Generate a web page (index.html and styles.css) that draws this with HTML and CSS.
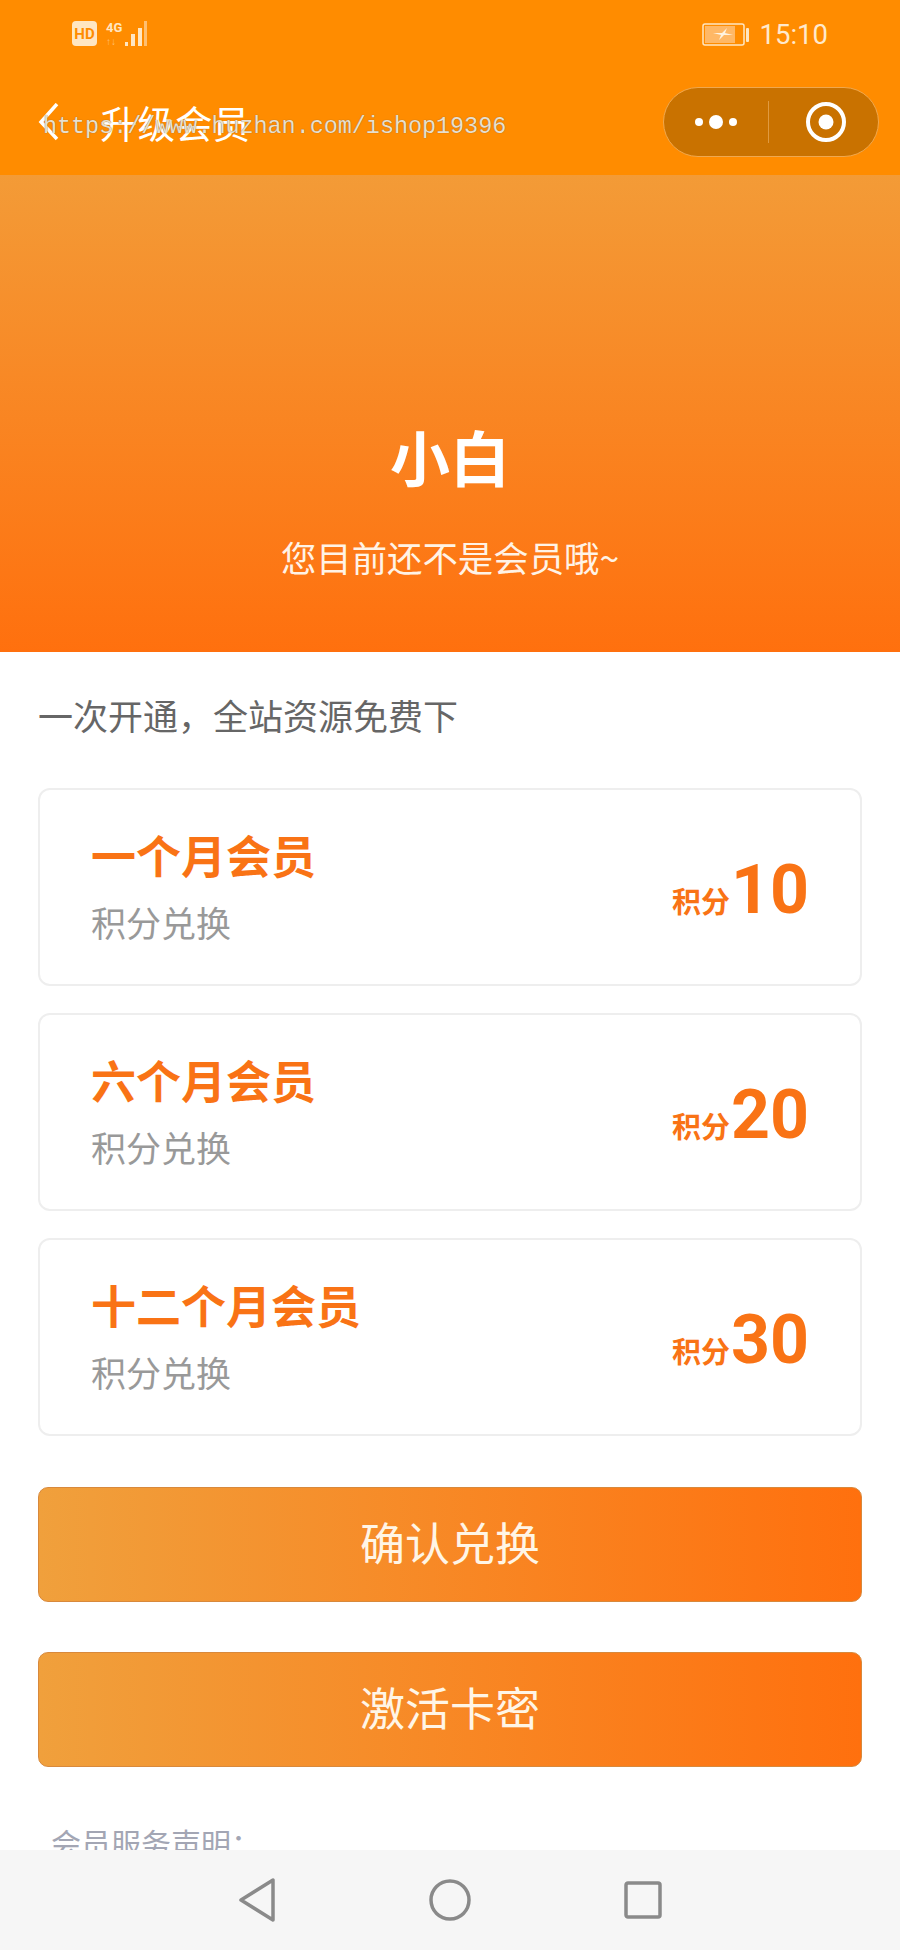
FILE: index.html
```html
<!DOCTYPE html>
<html lang="zh-CN">
<head>
<meta charset="utf-8">
<title>升级会员</title>
<link rel="stylesheet" href="styles.css">
</head>
<body>
<div class="phone">
  <header class="top">
    <div class="status">
      <div class="status-left">
        <svg class="net" width="80" height="28" viewBox="0 0 80 28">
          <rect x="1" y="1" width="25" height="25" rx="4" fill="#ffe6c2"/>
          <text x="13.5" y="19" class="hd">HD</text>
          <text x="35" y="12" class="four-g">4G</text>
          <text x="35" y="25" class="up-down">↑↓</text>
          <rect x="54" y="22" width="3" height="4" fill="#ffe6c2"/>
          <rect x="60" y="14" width="4" height="12" fill="#ffe6c2"/>
          <rect x="67" y="8" width="4" height="18" fill="#ffe6c2"/>
          <rect x="73" y="1" width="3" height="25" fill="#ffbf70"/>
        </svg>
      </div>
      <div class="status-right">
        <svg width="48" height="24" viewBox="0 0 48 24">
          <rect x="1" y="1" width="41" height="21" rx="2" fill="none" stroke="#ffe6c2" stroke-width="1.5"/>
          <rect x="3" y="3" width="30" height="17" fill="#ffb866"/>
          <rect x="44" y="5" width="3" height="14" rx="1" fill="#ffe6c2"/>
          <path d="M11 10l9 0 5-5-2 5 8 2-9 0-5 5 2-5z" fill="#fff3e0"/>
        </svg>
        <span class="time">15:10</span>
      </div>
    </div>
    <div class="nav">
      <div class="nav-left">
        <svg class="back" width="26" height="38" viewBox="0 0 26 38">
          <path d="M19 1L3 19l16 17" fill="none" stroke="#fff" stroke-width="3.5"/>
        </svg>
        <span class="nav-title">升级会员</span>
      </div>
      <div class="capsule">
        <div class="capsule-part">
          <svg width="42" height="16" viewBox="0 0 42 16">
            <circle cx="4" cy="8" r="4" fill="#fff"/>
            <circle cx="21" cy="8" r="7" fill="#fff"/>
            <circle cx="38" cy="8" r="4" fill="#fff"/>
          </svg>
        </div>
        <div class="capsule-line"></div>
        <div class="capsule-part capsule-target">
          <svg width="42" height="42" viewBox="0 0 42 42">
            <circle cx="21" cy="21" r="18" fill="none" stroke="#fff" stroke-width="4"/>
            <circle cx="21" cy="21" r="7.5" fill="#fff"/>
          </svg>
        </div>
      </div>
    </div>
    <div class="watermark">https://www.huzhan.com/ishop19396</div>
  </header>

  <main class="content">
    <section class="hero">
      <h1 class="hero-name">小白</h1>
      <p class="hero-sub">您目前还不是会员哦~</p>
    </section>
    <section class="body">
      <p class="intro">一次开通&#xFF0C;全站资源免费下</p>
      <div class="plans">
        <div class="plan">
          <div class="plan-info">
            <div class="plan-name">一个月会员</div>
            <div class="plan-note">积分兑换</div>
          </div>
          <div class="plan-price"><span class="unit">积分</span><span class="num">10</span></div>
        </div>
        <div class="plan">
          <div class="plan-info">
            <div class="plan-name">六个月会员</div>
            <div class="plan-note">积分兑换</div>
          </div>
          <div class="plan-price"><span class="unit">积分</span><span class="num">20</span></div>
        </div>
        <div class="plan">
          <div class="plan-info">
            <div class="plan-name">十二个月会员</div>
            <div class="plan-note">积分兑换</div>
          </div>
          <div class="plan-price"><span class="unit">积分</span><span class="num">30</span></div>
        </div>
      </div>
      <div class="actions">
        <button class="btn">确认兑换</button>
        <button class="btn">激活卡密</button>
      </div>
      <p class="notice">会员服务声明&#xFF1A;</p>
    </section>
  </main>

  <footer class="sysnav">
    <svg width="38" height="44" viewBox="0 0 38 44">
      <path d="M35 2v40L3 22z" fill="none" stroke="#8a8a8a" stroke-width="3.5" stroke-linejoin="round"/>
    </svg>
    <svg width="42" height="42" viewBox="0 0 42 42">
      <circle cx="21" cy="21" r="19" fill="none" stroke="#8a8a8a" stroke-width="3.5"/>
    </svg>
    <svg width="38" height="38" viewBox="0 0 38 38">
      <rect x="2" y="2" width="34" height="34" rx="2" fill="none" stroke="#8a8a8a" stroke-width="3.5"/>
    </svg>
  </footer>
</div>
</body>
</html>
```
FILE: styles.css
```css
* { box-sizing: border-box; margin: 0; padding: 0; }

html, body { width: 900px; height: 1950px; overflow: hidden; background: #fff; }

body { font-family: "Noto Sans CJK SC", "Noto Sans", sans-serif; }

.phone { width: 900px; height: 1950px; display: flex; flex-direction: column; }

/* status bar + title bar */
.top { position: relative; height: 175px; flex: none; background: #ff8c00; }

.status {
  height: 68px;
  padding: 20px 72px 0 71px;
  display: flex;
  justify-content: space-between;
  align-items: flex-start;
}

.status-left { display: flex; }
.status-right { display: flex; align-items: center; gap: 10px; margin-top: 1px; margin-left: auto; }

.hd { font: 700 15px "Roboto", sans-serif; fill: #ff8c00; text-anchor: middle; }
.four-g { font: 700 13px "Roboto", sans-serif; fill: #ffe6c2; }
.up-down { font: 400 10px "Roboto", sans-serif; fill: #ffc078; }

.time { font: 400 27.5px/1 "Roboto", sans-serif; color: #ffe9cc; }

.nav {
  height: 107px;
  padding: 19px 21px 19px 38px;
  display: flex;
  justify-content: space-between;
  align-items: flex-start;
}

.nav-left { display: flex; align-items: center; gap: 36px; height: 70px; }
.nav-title { font-size: 37.5px; line-height: 1; color: #fff; }

.capsule {
  width: 216px;
  height: 70px;
  border-radius: 35px;
  background: #c97200;
  border: 1px solid #f0a84e;
  display: flex;
  align-items: center;
}

.capsule-part { flex: 1; display: flex; justify-content: center; align-items: center; }
.capsule-target { padding-left: 5px; }
.capsule-line { width: 1px; height: 42px; background: #e09a40; }

.watermark {
  position: absolute;
  left: 43px;
  top: 109px;
  font: 400 23.4px/36px "Liberation Mono", monospace;
  color: #eadfcc;
  text-shadow: 0 0 1px #7a5a30;
  white-space: nowrap;
}

.content { flex: 1; min-height: 0; overflow: hidden; }

/* member banner */
.hero {
  height: 477px;
  background: linear-gradient(180deg, #f39b37, #ff700e);
  display: flex;
  flex-direction: column;
  align-items: center;
  color: #fff;
}

.hero-name { margin-top: 243px; font-size: 60px; font-weight: 700; line-height: 76px; }
.hero-sub { margin-top: 39px; font-size: 35.4px; line-height: 48px; color: #fff3e6; }

.body { padding: 0 38px; }

.intro { margin-top: 38px; font-size: 35px; line-height: 50px; color: #666; }

.plans { margin-top: 48px; display: flex; flex-direction: column; gap: 27px; }

.plan {
  height: 198px;
  border: 2px solid #eee;
  border-radius: 12px;
  padding: 0 51px;
  display: flex;
  justify-content: space-between;
  align-items: center;
  background: #fff;
}

.plan-info { margin-top: -3px; }
.plan-name { font-size: 45px; font-weight: 700; line-height: 60px; color: #f97315; }
.plan-note { margin-top: 12px; font-size: 35px; line-height: 50px; color: #999; }

.plan-price { display: flex; align-items: baseline; color: #f97315; font-weight: 700; margin-top: 6px; }
.unit { font-size: 29px; margin-right: 1px; }
.num { font: 700 68px/1 "Roboto", sans-serif; }

.actions { margin-top: 51px; display: flex; flex-direction: column; gap: 50px; }

.btn {
  height: 115px;
  padding-bottom: 6px;
  border: 1px solid #d8893c;
  border-radius: 10px;
  background: linear-gradient(90deg, #f0a03c, #ff700e);
  color: #fff5e6;
  font: 400 45px/1 "Noto Sans CJK SC", sans-serif;
}

.notice { margin: 55px 0 0 13px; font-size: 30px; line-height: 40px; color: #a3a6b4; }

/* system navigation */
.sysnav {
  height: 100px;
  flex: none;
  background: #f6f6f6;
  display: flex;
  justify-content: center;
  align-items: center;
  gap: 153px;
}
```
